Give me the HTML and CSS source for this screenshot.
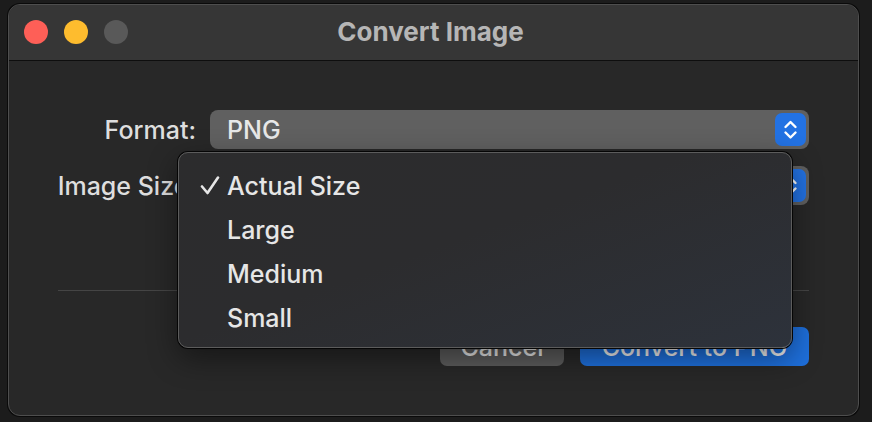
FILE: index.html
```html
<!DOCTYPE html>
<html lang="en">
<head>
<meta charset="utf-8">
<title>Convert Image</title>
<link rel="stylesheet" href="styles.css">
</head>
<body>
<div class="desk">
  <div class="window">
    <div class="titlebar">
      <div class="lights">
        <span class="light red"></span>
        <span class="light yellow"></span>
        <span class="light grey"></span>
      </div>
      <div class="title">Convert Image</div>
    </div>
    <div class="content">
      <div class="form">
        <label class="label">Format:</label>
        <div class="popup">
          <span class="popup-text">PNG</span>
          <span class="stepper">
            <svg width="31" height="33" viewBox="0 0 31 33"><path d="M10.5 14 L15.5 9 L20.5 14" fill="none" stroke="#fff" stroke-width="2.4" stroke-linecap="round" stroke-linejoin="round"/><path d="M10.5 19.5 L15.5 24.5 L20.5 19.5" fill="none" stroke="#fff" stroke-width="2.4" stroke-linecap="round" stroke-linejoin="round"/></svg>
          </span>
        </div>
        <label class="label">Image Size:</label>
        <div class="popup">
          <span class="popup-text">Actual Size</span>
          <span class="stepper">
            <svg width="31" height="33" viewBox="0 0 31 33"><path d="M10.5 14 L15.5 9 L20.5 14" fill="none" stroke="#fff" stroke-width="2.4" stroke-linecap="round" stroke-linejoin="round"/><path d="M10.5 19.5 L15.5 24.5 L20.5 19.5" fill="none" stroke="#fff" stroke-width="2.4" stroke-linecap="round" stroke-linejoin="round"/></svg>
          </span>
        </div>
      </div>
      <div class="separator"></div>
      <div class="buttons">
        <button class="btn cancel">Cancel</button>
        <button class="btn primary">Convert to PNG</button>
      </div>
    </div>
    <div class="menu">
      <div class="item"><span class="check"><svg width="20" height="20" viewBox="0 0 20 20"><path d="M2 10.5 L7.5 17 L18 1.5" fill="none" stroke="#e6e6e6" stroke-width="2.6" stroke-linecap="round" stroke-linejoin="round"/></svg></span>Actual Size</div>
      <div class="item"><span class="check"></span>Large</div>
      <div class="item"><span class="check"></span>Medium</div>
      <div class="item"><span class="check"></span>Small</div>
    </div>
  </div>
</div>
</body>
</html>
```

FILE: styles.css
```css
html, body {
  margin: 0;
  padding: 0;
}
body {
  width: 872px;
  height: 422px;
  background: #1c1c1c;
  font-family: Inter, "Open Sans", "Noto Sans", sans-serif;
  overflow: hidden;
}
.desk {
  padding: 4px 0 0 8px;
}
.window {
  position: relative;
  width: 849px;
  height: 410px;
  border: 1px solid #4e4e4e;
  border-radius: 12px;
  background: #282828;
  box-shadow: 0 0 0 1px #0a0a0a;
  overflow: hidden;
  display: flex;
  flex-direction: column;
}
.titlebar {
  position: relative;
  height: 55px;
  flex: none;
  background: #363636;
  border-bottom: 1px solid #0e0e0e;
  display: flex;
  align-items: center;
  justify-content: center;
}
.lights {
  position: absolute;
  left: 15px;
  top: 15px;
  display: flex;
  gap: 16px;
}
.light {
  width: 24px;
  height: 24px;
  border-radius: 50%;
}
.red { background: #fe5f57; }
.yellow { background: #febc2e; }
.grey { background: #595959; }
.title {
  font-size: 26px;
  font-weight: 700;
  color: #b6b6b6;
  margin-left: -6px;
  margin-top: -2px;
}
.content {
  flex: 1;
  padding: 49px 49px 0 49px;
  display: flex;
  flex-direction: column;
}
.form {
  display: grid;
  grid-template-columns: 138px 1fr;
  column-gap: 14px;
  row-gap: 17px;
  align-items: center;
}
.label {
  justify-self: end;
  font-size: 25px;
  font-weight: 500;
  color: #dedede;
  white-space: nowrap;
}
.popup {
  height: 39px;
  border-radius: 8px;
  background: #606060;
  display: flex;
  align-items: center;
  justify-content: space-between;
  padding: 0 3px 0 17px;
}
.popup-text {
  font-size: 25px;
  font-weight: 500;
  color: #e8e8e8;
}
.stepper {
  width: 31px;
  height: 33px;
  border-radius: 7px;
  background: #2372e3;
  display: flex;
}
.separator {
  margin-top: 85px;
  height: 1px;
  background: #454545;
}
.buttons {
  margin-top: 36px;
  display: flex;
  justify-content: flex-end;
  gap: 16px;
}
.btn {
  height: 39px;
  border: none;
  border-radius: 7px;
  font-family: inherit;
  font-size: 25px;
  font-weight: 500;
  color: #e8e8e8;
  padding: 0;
}
.cancel {
  width: 124px;
  background: #5c5c5c;
}
.primary {
  width: 229px;
  background: #1e6fdb;
  color: #f2f2f2;
}
.menu {
  position: absolute;
  left: 169px;
  top: 147px;
  width: 614px;
  height: 196px;
  box-sizing: border-box;
  border: 1px solid #5c5c5c;
  border-radius: 10px;
  background: linear-gradient(160deg, #2c2c2d 0%, #2c2c2e 45%, #2d323b 100%);
  box-shadow: 0 0 0 1px #050505, 0 10px 30px rgba(0,0,0,0.45);
  padding-top: 11px;
}
.item {
  height: 44px;
  display: flex;
  align-items: center;
  font-size: 25px;
  font-weight: 500;
  color: #e6e6e6;
}
.check {
  width: 27px;
  padding-left: 21px;
  flex: none;
  display: flex;
  align-items: center;
}
```
